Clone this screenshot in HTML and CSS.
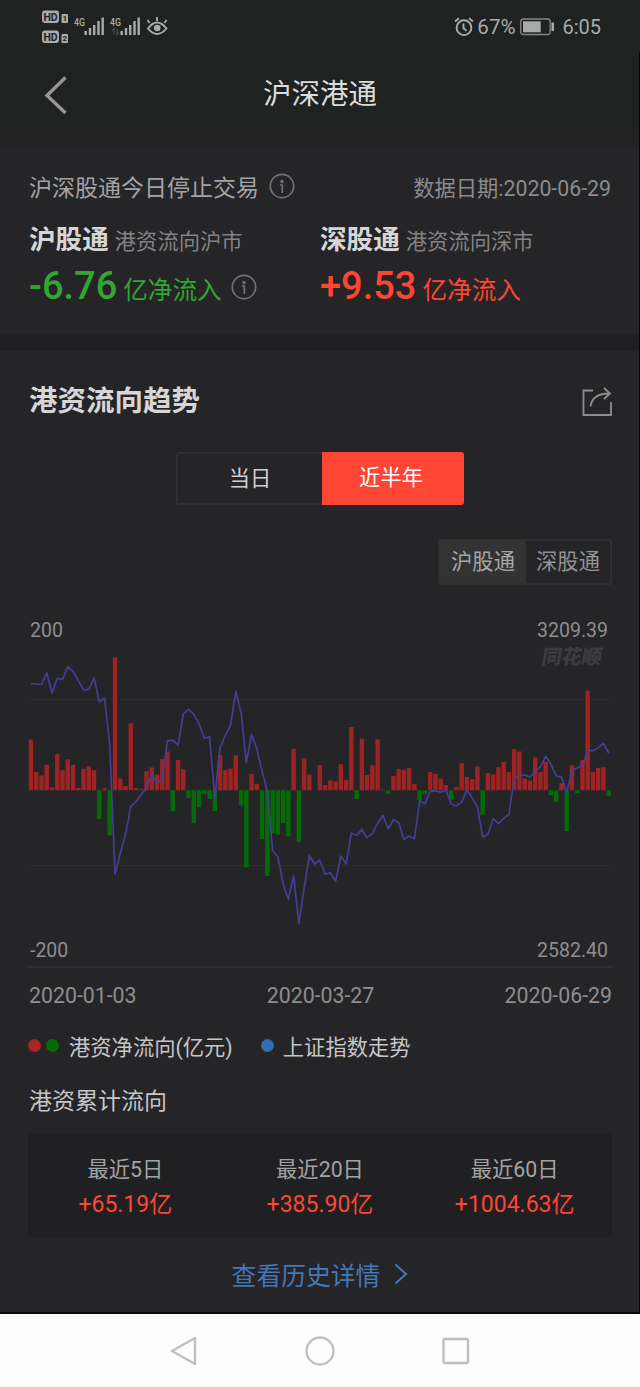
FILE: index.html
```html
<!DOCTYPE html>
<html lang="zh-CN">
<head>
<meta charset="utf-8">
<title>沪深港通</title>
<link rel="stylesheet" href="styles.css">
</head>
<body>
<div class="screen">
  <header class="top">
    <div class="status">
      <svg class="status-left" width="130" height="36" viewBox="0 0 130 36">
        <g fill="#a9abaa">
          <rect x="1" y="0.5" width="17" height="12.5" rx="3"/>
          <rect x="1" y="20.5" width="17" height="12.5" rx="3"/>
          <rect x="20.5" y="4" width="6.5" height="9" rx="1"/>
          <rect x="20.5" y="24" width="6.5" height="9" rx="1"/>
        </g>
        <g class="badge">
          <text x="9.5" y="10.6" font-size="10.5" text-anchor="middle">HD</text>
          <text x="9.5" y="30.6" font-size="10.5" text-anchor="middle">HD</text>
          <text x="23.7" y="11.4" font-size="8" text-anchor="middle">1</text>
          <text x="23.7" y="31.4" font-size="8" text-anchor="middle">2</text>
        </g>
        <g class="net">
          <text x="33" y="15.5" textLength="11" lengthAdjust="spacingAndGlyphs">4G</text>
          <text x="69" y="15.5" textLength="11" lengthAdjust="spacingAndGlyphs">4G</text>
        </g>
        <path d="M44.700 25v-4M49 25v-7M53.200 25V15M57.500 25V11M61.700 25V7.500M80.700 25v-4M85 25v-7M89.200 25V15M93.500 25V11M97.700 25V7.500" stroke="#a9abaa" stroke-width="2.400"/>
        <path d="M73 24.500v-6l-1.500 2M76 18.500v6l1.500-2" stroke="#505352" stroke-width="1.200" fill="none"/>
        <g stroke="#a9abaa" stroke-width="1.900" fill="none">
          <path d="M107 18.500Q116 6.500 125.500 18.500Q116 29.500 107 18.500ZM116 11V7M108.500 13l-2-3M123.500 13l2-3"/>
        </g>
        <circle cx="116.200" cy="18" r="3.300" fill="#a9abaa"/>
      </svg>
      <div class="status-right">
        <svg width="20" height="20" viewBox="0 0 20 20" fill="none" stroke="#a9abaa" stroke-width="1.900">
          <circle cx="10" cy="10.700" r="7.400"/><path d="M9.500 6.500v4.700l3 2.500M1 4.500L5 1.300M19 4.500L15 1.300"/>
        </svg>
        <span class="pct">67%</span>
        <svg width="36" height="18" viewBox="0 0 36 18">
          <rect x="1.700" y="1" width="29.500" height="15.500" rx="2.500" fill="none" stroke="#858786" stroke-width="1.300"/>
          <rect x="4" y="3.300" width="17.700" height="11" fill="#a9abaa"/>
          <rect x="32.500" y="4.500" width="2.500" height="8.500" fill="#a9abaa"/>
        </svg>
        <span class="clock">6:05</span>
      </div>
    </div>
    <div class="titlebar">
      <svg class="back" width="26" height="40" viewBox="0 0 26 40"><path d="M22.500 2.500L4 20.500L22.500 38" fill="none" stroke="#969696" stroke-width="3.400"/></svg>
      <h1 class="title">沪深港通</h1>
    </div>
  </header>

  <section class="summary">
    <div class="notice">
      <span class="notice-text">沪深股通今日停止交易</span>
      <svg class="info" width="26" height="26" viewBox="0 0 26 26"><circle cx="13" cy="13" r="11.700"/><circle class="dot" cx="13" cy="8.500" r="1.700"/><path d="M11 12h2.300v8"/></svg>
      <span class="date">数据日期:2020-06-29</span>
    </div>
    <div class="markets">
      <div class="market">
        <div class="market-head"><b>沪股通</b><span>港资流向沪市</span></div>
        <div class="flow down"><strong>-6.76</strong><span>亿净流入</span>
          <svg class="info" width="26" height="26" viewBox="0 0 26 26"><circle cx="13" cy="13" r="11.700"/><circle class="dot" cx="13" cy="8.500" r="1.700"/><path d="M11 12h2.300v8"/></svg>
        </div>
      </div>
      <div class="market">
        <div class="market-head"><b>深股通</b><span>港资流向深市</span></div>
        <div class="flow up"><strong>+9.53</strong><span>亿净流入</span></div>
      </div>
    </div>
  </section>

  <main class="trend">
    <div class="trend-head">
      <h2>港资流向趋势</h2>
      <svg width="30" height="30" viewBox="0 0 30 30" fill="none" stroke="#8d8d8d" stroke-width="1.800">
        <path d="M11 3.500H1.500V28H29V15M8.500 19.500C9.500 11.500 15 6.500 27.500 6.500M22 1l6 5.500l-6 5.500"/>
      </svg>
    </div>
    <div class="tabs"><span class="tab">当日</span><span class="tab active">近半年</span></div>
    <div class="toggle-row"><div class="toggle"><span class="opt on">沪股通</span><span class="opt">深股通</span></div></div>

    <div class="scale"><span>200</span><span>3209.39</span></div>
    <div class="plot">
      <svg id="chart" width="584" height="296" viewBox="28 640 584 296">
        <path class="grid" d="M30 699.500H611M30 865.500H611"/>
        <path class="grid faint" d="M30 783.500H611"/>
        <path class="bars-up" id="up"/>
        <path class="bars-down" id="down"/>
        <polyline class="index" id="index"/>
      </svg>
      <span class="mark">同花顺</span>
    </div>
    <div class="scale bottom"><span>-200</span><span>2582.40</span></div>
    <div class="dates"><span>2020-01-03</span><span>2020-03-27</span><span>2020-06-29</span></div>
    <div class="legend">
      <i class="dot-red"></i><i class="dot-green"></i><span class="legend-flow">港资净流向(亿元)</span>
      <i class="dot-blue"></i><span>上证指数走势</span>
    </div>

    <h3>港资累计流向</h3>
    <div class="totals">
      <div><p>最近5日</p><em>+65.19亿</em></div>
      <div><p>最近20日</p><em>+385.90亿</em></div>
      <div><p>最近60日</p><em>+1004.63亿</em></div>
    </div>
    <div class="more">查看历史详情<svg width="14" height="22" viewBox="0 0 14 22"><path d="M1.500 1.500L12 11L1.500 20.500" fill="none" stroke="#4377b8" stroke-width="2"/></svg></div>
  </main>

  <nav class="nav">
    <svg width="30" height="32" viewBox="0 0 30 32"><path d="M26 3V29L3 16Z"/></svg>
    <svg width="30" height="32" viewBox="0 0 30 32"><circle cx="15" cy="16" r="13.500"/></svg>
    <svg width="30" height="32" viewBox="0 0 30 32"><rect x="2.500" y="4" width="24.500" height="24" rx="1"/></svg>
  </nav>
  <div class="edge"></div>
</div>
<script src="chart.js"></script>
</body>
</html>
```

FILE: styles.css
```css
* { box-sizing: border-box; }
body {
  margin: 0;
  font-family: Roboto, "Noto Sans CJK SC", sans-serif;
  font-size: 21.3px;
  color: #a3a3a4;
  background: #252427;
}
h1, h2, h3, p { margin: 0; }
svg { display: block; flex: none; }
.screen { position: relative; width: 640px; height: 1387px; display: flex; flex-direction: column; overflow: hidden; }

.top { height: 147px; background: #202222; border-bottom: 13px solid #222124; }
.status { height: 52px; padding: 10px 39px 0 41px; display: flex; justify-content: space-between; align-items: flex-start; }
.badge text { font-family: Roboto, sans-serif; font-weight: 700; fill: #202222; }
.net text { font-family: Roboto, sans-serif; font-weight: 500; font-size: 11.5px; fill: #a9abaa; }
.status-right { display: flex; align-items: center; height: 34px; color: #a9abaa; font-size: 20px; }
.pct { margin: 0 4px 0 3px; font-size: 20.5px; }
.clock { margin-left: 7px; font-size: 20px; }
.titlebar { height: 86px; display: grid; grid-template-columns: 100px 1fr 100px; align-items: center; padding-left: 0; }
.back { margin-left: 43px; }
.title { font-size: 28.5px; font-weight: 400; line-height: 40px; color: #dcdcdc; text-align: center; }

.summary { height: 187px; padding: 23px 29px 0; }
.notice { display: flex; align-items: center; height: 32px; }
.notice-text { font-size: 23px; }
.notice .info { margin-left: 10px; }
.date { margin-left: auto; color: #8c8c8d; white-space: nowrap; }
.info { fill: none; stroke: #727273; stroke-width: 1.7; }
.info .dot { fill: #727273; stroke: none; }
.markets { display: grid; grid-template-columns: 291px 1fr; margin-top: 20px; }
.market-head { height: 36px; display: flex; align-items: baseline; line-height: 36px; white-space: nowrap; }
.market-head b { font-size: 26.6px; color: #d6d6d6; margin-right: 6px; }
.market-head span { color: #838384; }
.flow { height: 52px; line-height: 56px; display: flex; align-items: baseline; }
.flow strong { font-size: 38px; font-weight: 500; }
.flow span { font-size: 24.6px; margin-left: 6px; }
.flow .info { align-self: center; margin: 5px 0 0 9px; }
.down { color: #33a533; }
.up { color: #ff4534; }

.trend { height: 980px; border-top: 17px solid #201f22; border-bottom: 2px solid #0c0c0c; padding: 0 28px; }
.trend-head { display: flex; align-items: center; justify-content: space-between; height: 101px; padding-left: 1px; }
.trend-head h2 { font-size: 28.5px; color: #d6d6d6; line-height: 40px; }
.tabs { width: 288px; height: 53px; margin: 0 auto; display: grid; grid-template-columns: 146px 142px; text-align: center; line-height: 52px; color: #d0d0d0; }
.tab { border: 2px solid #303031; border-right: 0; border-radius: 3px 0 0 3px; line-height: 49px; }
.tab.active { background: #ff4534; color: #fff; border: 0; border-radius: 0 3px 3px 0; line-height: 52px; padding-right: 4px; }
.toggle-row { display: flex; justify-content: flex-end; padding-top: 34px; height: 102px; }
.toggle { width: 174px; height: 46px; border: 2px solid #303031; border-radius: 3px; display: grid; grid-template-columns: 86px 84px; text-align: center; line-height: 42px; color: #939394; }
.opt.on { background: #333334; color: #a6a6a6; }
.scale { display: flex; justify-content: space-between; height: 33px; line-height: 48px; padding: 0 4px 0 2px; font-size: 19.5px; color: #8e8e8f; }
.plot { position: relative; height: 296px; }
.grid { stroke: #2d2d2f; fill: none; stroke-width: 1.2; }
.faint { opacity: .4; }
.bars-up { stroke: #a02324; stroke-width: 4.4; fill: none; }
.bars-down { stroke: #056b08; stroke-width: 4.4; fill: none; }
.index { stroke: #433f94; stroke-width: 1.7; fill: none; stroke-linejoin: round; }
.mark { position: absolute; right: 10px; top: 5px; font-size: 20px; line-height: 24px; font-weight: 900; color: #3c3c40; transform: skewX(-10deg); }
.scale.bottom { height: 32px; line-height: 30px; border-bottom: 2px solid #303031; }
.dates { display: flex; justify-content: space-between; height: 54px; line-height: 55px; color: #8e8e8f; padding-left: 1px; }
.legend { display: flex; align-items: center; height: 46px; color: #c6c6c7; }
.legend i { width: 13px; height: 13px; border-radius: 50%; margin-right: 5px; flex: none; }
.dot-red { background: #a92526; }
.dot-green { background: #046b05; }
.legend .dot-green { margin-right: 10px; }
.dot-blue { background: #356cb0; }
.legend .dot-blue { margin: 0 9px 0 28px; }
.trend h3 { font-size: 23px; font-weight: 400; height: 65px; line-height: 68px; color: #c6c6c7; padding-left: 1px; }
.totals { display: grid; grid-template-columns: repeat(3, 1fr); height: 104px; padding-top: 19px; background: #202022; text-align: center; }
.totals p { line-height: 35px; }
.totals em { display: block; font-style: normal; font-size: 23px; line-height: 35px; color: #ff4534; }
.more { display: flex; justify-content: center; align-items: center; gap: 14px; height: 74px; font-size: 24.8px; color: #4377b8; padding-right: 0; }
.nav { height: 73px; background: #fdfdfd; display: flex; justify-content: center; gap: 106px; align-items: center; }
.nav svg { fill: none; stroke: #bfbfbf; stroke-width: 2.3; stroke-linejoin: round; }
.edge { position: absolute; right: 0; top: 52px; width: 1px; height: 1262px; background: #050505; }
```

FILE: chart.js
```javascript
// Daily net flow, as bar height above (+) or below (-) the zero line.
const flows = [
  50.7, 18.3, 14.7, 25.3, 3, 36.3, 20, 31, 25.3, 2.3, 21.3, 24, 20, -28.7, 2, -45.3, 132.7, 11.7, 4.3, 66.7,
  2.3, 1, 19, 22.7, 15.7, 31.3, 38.7, -21, 30.3, 21, -7.7, -33, -17, -3.7, -8.7, -20.7, 35.3, 20.3, 21.7, 34.7,
  -15.3, -77.3, 16.3, 6.3, -48.7, -85.7, -43, -44.3, -32.7, -46.3, 41.3, -51.7, 31.7, 15.7, 0, 25.3, 5.3, 9.7, 8.7, 26,
  10.3, 63.3, -8.7, 51.7, 15.3, 25, 50.7, 0.7, -3.7, 14.3, 21.3, 20.3, 22.3, 6.3, -10.3, -3.7, 18.3, 16.3, 11.7, 5.3,
  -9.3, 3.3, 27, 13.3, 11, 23.7, -24.3, 17.3, 15.7, 23.3, 28.3, 18.3, 41, 38.7, 11.7, 9.7, 32.7, 18.3, 28.3, -5,
  -11.7, 7, -40.7, 25, -3, 30.3, 99.7, 18.3, 22.3, 23.3, -6
];
// Index line, in thirds of a pixel below the top of the plot.
const line = [
  131, 132, 133, 99, 159, 115, 118, 80, 94, 121, 150, 148, 114, 185, 174, 315, 703, 640, 583, 500,
  485, 463, 443, 402, 430, 415, 302, 301, 315, 222, 208, 223, 252, 295, 290, 474, 323, 286, 255, 154,
  218, 368, 283, 328, 394, 455, 632, 650, 732, 778, 707, 850, 745, 647, 672, 661, 703, 698, 723, 648,
  672, 579, 586, 569, 593, 580, 550, 526, 566, 539, 548, 598, 588, 596, 483, 491, 455, 452, 457, 450,
  493, 497, 487, 449, 474, 500, 591, 583, 536, 551, 535, 524, 414, 407, 405, 411, 394, 380, 349, 373,
  408, 411, 458, 392, 383, 377, 332, 332, 323, 310, 339
];
const x = i => (31 + i * 5.252).toFixed(2);
const bars = keep => flows.map((v, i) => keep(v) ? `M${x(i)} 790.3v${-v}` : '').join('');
document.getElementById('up').setAttribute('d', bars(v => v > 0));
document.getElementById('down').setAttribute('d', bars(v => v < 0));
document.getElementById('index').setAttribute('points', line.map((v, i) => `${x(i)},${(640 + v / 3).toFixed(1)}`).join(' '));
```
